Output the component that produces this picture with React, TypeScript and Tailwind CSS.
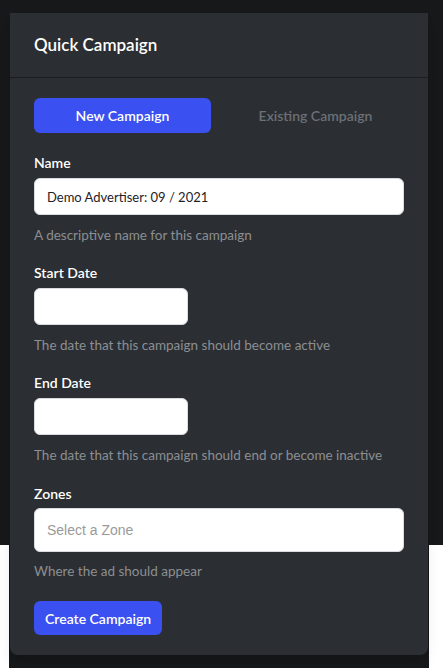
import React from 'react';

const fieldLabel = 'block text-[14px] font-semibold leading-5 text-white';
const helper = 'mt-[10px] text-[13.5px] leading-5 text-[#8b8e93]';
const inputBase =
  'block h-[37px] rounded-md border border-[#d8dbe0] bg-white px-3 text-[13px] text-[#1f2226] outline-none';

export default function App() {
  return (
    <div className="relative h-[668px] w-[443px] overflow-hidden bg-white" style={{ fontFamily: 'Lato, "Open Sans", sans-serif' }}>
      {/* backdrop behind the dialog */}
      <div className="absolute inset-x-0 top-0 h-[545px] bg-[#17181a]" />

      <div className="relative ml-[9px] h-full w-[420px] bg-[#17181a] px-[1px] pt-[13px]">
        <div className="rounded-b-lg bg-[#2b2e32] shadow-lg">
          <div className="flex h-[65px] items-center border-b border-[#1b1d20] px-6">
            <h2 className="text-[17px] font-semibold text-white">Quick Campaign</h2>
          </div>

          <div className="px-6 pt-5 pb-5">
            <div className="grid grid-cols-2 gap-4">
              <button className="h-[35px] rounded-md bg-[#3b50f0] text-[14px] font-semibold text-white">
                New Campaign
              </button>
              <button className="h-[35px] rounded-md text-[14px] font-semibold text-[#6c7078]">
                Existing Campaign
              </button>
            </div>

            <div className="mt-5">
              <label className={fieldLabel}>Name</label>
              <input
                className={`${inputBase} mt-[5px] w-full`}
                defaultValue="Demo Advertiser: 09 / 2021"
              />
              <p className={helper}>A descriptive name for this campaign</p>
            </div>

            <div className="mt-[18px]">
              <label className={fieldLabel}>Start Date</label>
              <input className={`${inputBase} mt-[5px] w-[154px]`} />
              <p className={helper}>The date that this campaign should become active</p>
            </div>

            <div className="mt-[18px]">
              <label className={fieldLabel}>End Date</label>
              <input className={`${inputBase} mt-[5px] w-[154px]`} />
              <p className={helper}>The date that this campaign should end or become inactive</p>
            </div>

            <div className="mt-[19px]">
              <label className={fieldLabel}>Zones</label>
              <div className="mt-[4px] flex h-[44px] w-full items-center rounded-md border border-[#d8dbe0] bg-white px-3 text-[14px] text-[#9a9a9a]" style={{ fontFamily: '"Liberation Sans", Arial, sans-serif' }}>
                Select a Zone
              </div>
              <p className="mt-[9px] text-[13.5px] leading-5 text-[#8b8e93]">Where the ad should appear</p>
            </div>

            <button className="mt-5 h-[34px] rounded-md bg-[#3b50f0] px-[11px] text-[14px] font-semibold text-white">
              Create Campaign
            </button>
          </div>
        </div>
      </div>
    </div>
  );
}
